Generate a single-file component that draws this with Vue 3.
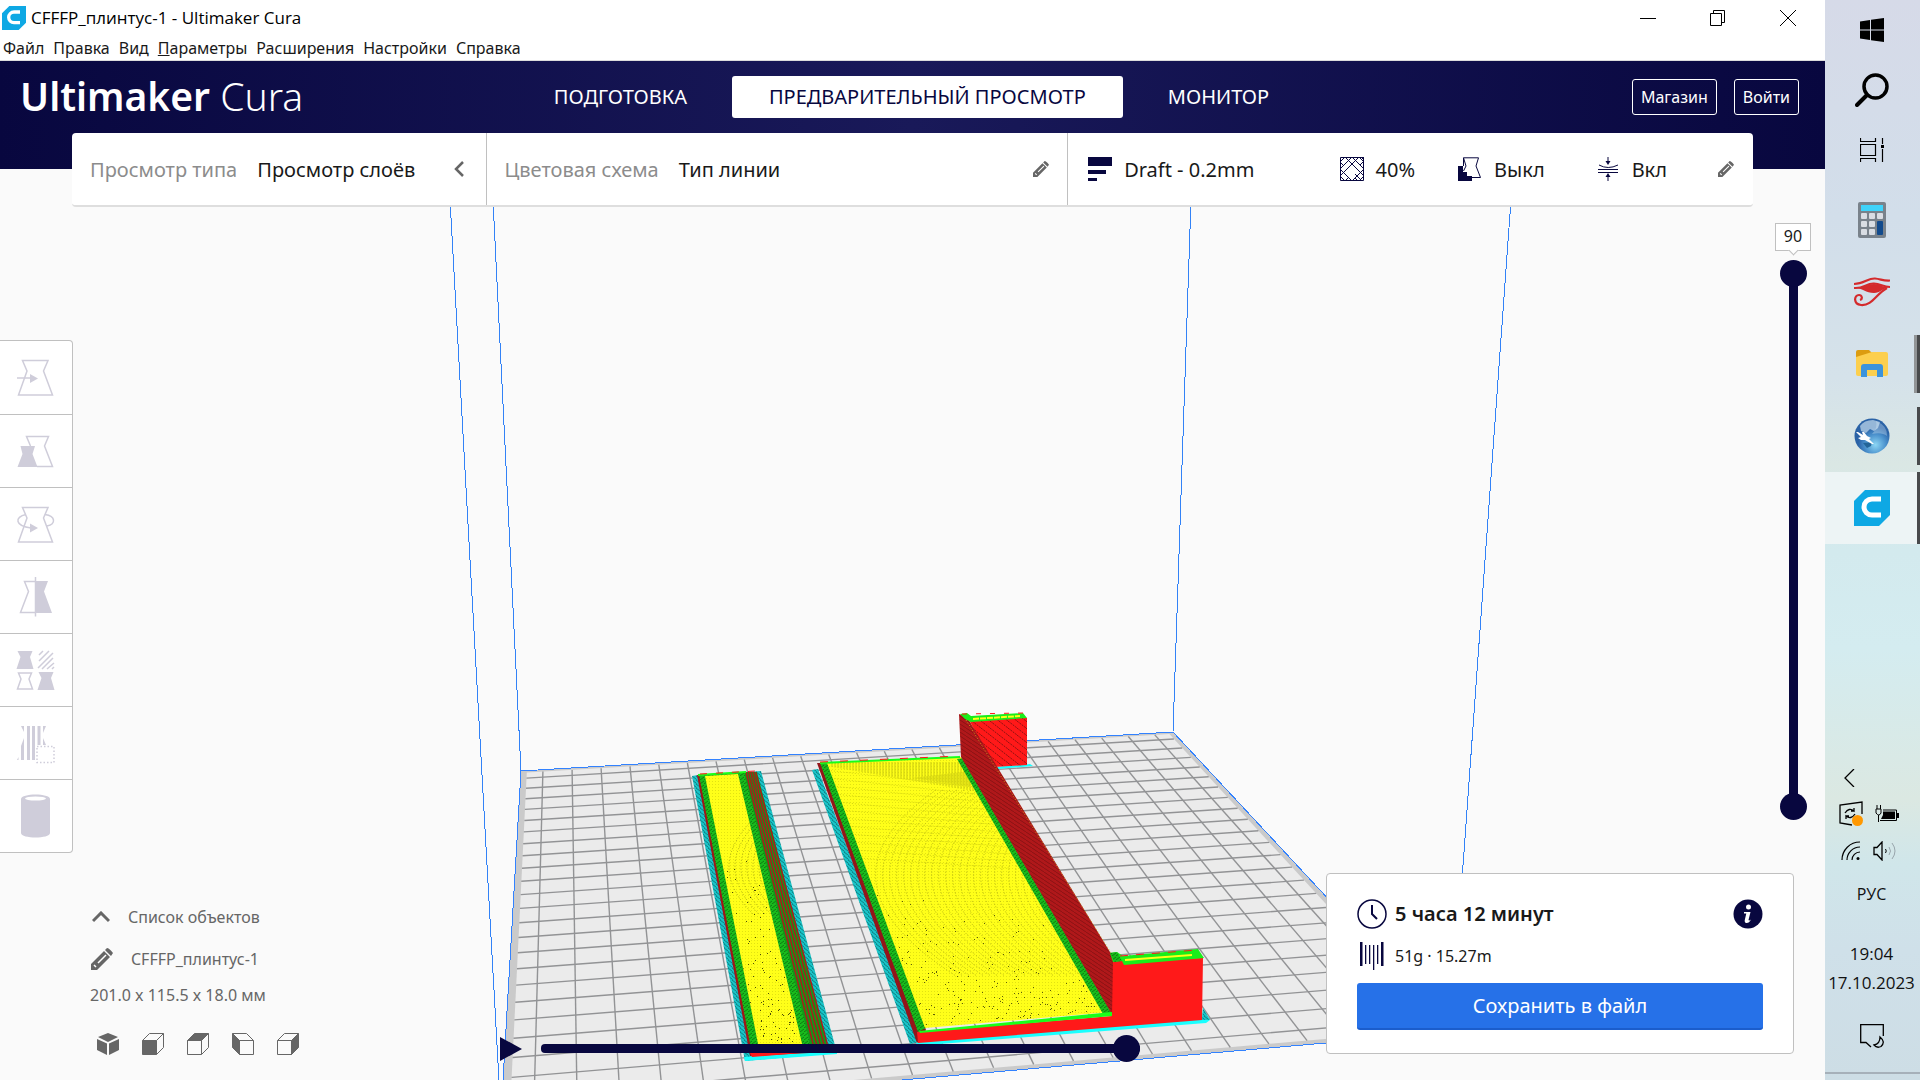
<script setup>
import { ref } from 'vue'

const menus = ['Файл', 'Правка', 'Вид', 'Параметры', 'Расширения', 'Настройки', 'Справка']
const stages = ['ПОДГОТОВКА', 'ПРЕДВАРИТЕЛЬНЫЙ ПРОСМОТР', 'МОНИТОР']
const activeStage = ref(1)
const topLayer = ref(90)
const bottomLayer = ref(0)
const pathStep = ref(100)

// Build plate, 235 x 235 mm, projected on the viewport
const plate = [[521, 771], [1173, 732], [1452, 1032], [501, 1115]]
const [[ax, ay], [bx, by], [cx, cy], [dx, dy]] = plate
const sx = ax - bx + cx - dx
const sy = ay - by + cy - dy
const det = (bx - cx) * (dy - cy) - (dx - cx) * (by - cy)
const g = (sx * (dy - cy) - (dx - cx) * sy) / det
const h = ((bx - cx) * sy - sx * (by - cy)) / det
function project(mx, my) {
  const u = mx / 235
  const v = my / 235
  const w = g * u + h * v + 1
  const x = ((bx - ax + g * bx) * u + (dx - ax + h * dx) * v + ax) / w
  const y = ((by - ay + g * by) * u + (dy - ay + h * dy) * v + ay) / w
  return [Math.round(x * 10) / 10, Math.round(y * 10) / 10]
}
const poly = (pts) => pts.map((p) => p.join(',')).join(' ')
const platePoints = poly(plate)
const innerPoints = poly([project(2, 2), project(233, 2), project(233, 233), project(2, 233)])
const gridLines = []
for (let i = 0; i < 23; i++) {
  const m = 7.5 + i * 10
  gridLines.push([...project(m, 2), ...project(m, 233)])
  gridLines.push([...project(2, m), ...project(233, m)])
}

// Red walls running along the narrow part
const ribs = [0, 1, 2, 3, 4].map((i) => [746 + i * 2.4, 772, 815 + i * 3.6, 1052])

// Toolpath rings on the top skin
const rings = []
for (let k = 0; k < 30; k++) {
  const x = 846 + k * 7
  rings.push(`M${x + 90},790 Q${x - 40},880 ${x + 110},976`)
}
const smallRings = []
for (let k = 0; k < 9; k++) {
  const x = 718 + k * 6
  smallRings.push(`M${x + 40},815 Q${x - 16},865 ${x + 36},915`)
}
const fan = []
for (let x = 832; x < 975; x += 3) fan.push([x, 762, x, 766 + (x - 826) * 0.17])
for (let x = 912; x < 970; x += 3) fan.push([x, 778 - (x - 912) * 0.12, x, 778 + (x - 912) * 0.14])

// Gaps between lines, denser towards the viewer
let seed = 7
const rnd = () => (seed = (seed * 16807) % 2147483647) / 2147483647
const specks = []
for (let i = 0; i < 420; i++) {
  const t = Math.sqrt(rnd())
  specks.push([Math.round(840 + rnd() * 280), Math.round(890 + t * 136)])
}
for (let i = 0; i < 240; i++) {
  const t = Math.sqrt(rnd())
  specks.push([Math.round(715 + rnd() * 90), Math.round(850 + t * 200)])
}

const keys = [0, 1, 2].flatMap((r) => [0, 1, 2].map((c) => [3 + c * 8, 11 + r * 8])).filter((k) => !(k[0] === 19 && k[1] > 12))
</script>

<template>
  <div class="desktop">
    <div class="window">
      <svg class="scene" viewBox="0 0 1825 1080" preserveAspectRatio="xMidYMin slice" aria-hidden="true">
        <defs>
          <pattern id="cyanTex" width="4" height="4" patternUnits="userSpaceOnUse">
            <rect width="4" height="4" fill="#19c4c8" /><path d="M0 0L4 3M-2 2L2 5" stroke="#0c7f82" />
          </pattern>
          <pattern id="greenTex" width="4" height="4" patternUnits="userSpaceOnUse">
            <rect width="4" height="4" fill="#18bb1c" /><path d="M0 4L4 1" stroke="#0c7a10" />
          </pattern>
          <pattern id="redTex" width="6" height="4" patternUnits="userSpaceOnUse">
            <rect width="6" height="4" fill="#b0181a" /><path d="M0 0L6 4" stroke="#8a1114" />
          </pattern>
          <pattern id="blockTex" width="9" height="7" patternUnits="userSpaceOnUse">
            <rect width="9" height="7" fill="#ff1919" /><path d="M0 0L9 7" stroke="#8c1010" stroke-dasharray="2 1" />
          </pattern>
          <pattern id="yellowTex" width="3" height="3" patternUnits="userSpaceOnUse">
            <rect width="3" height="3" fill="#ffff19" /><rect x="1" y="1" width="1" height="1" fill="#e2e212" />
          </pattern>
          <clipPath id="bigSkin"><polygon points="827,763 959,757 1108,1012 925,1028" /></clipPath>
          <clipPath id="slimSkin"><polygon points="706,776 738,774 804,1052 760,1054" /></clipPath>
        </defs>

        <rect width="1825" height="1080" fill="#fafafa" />
        <polygon :points="platePoints" fill="#cacaca" />
        <polygon :points="innerPoints" fill="#ebebeb" />
        <line v-for="(l, i) in gridLines" :key="'g' + i" :x1="l[0]" :y1="l[1]" :x2="l[2]" :y2="l[3]" stroke="#929395" stroke-width="1.4" />
        <polygon :points="platePoints" fill="none" stroke="#3282ff" shape-rendering="crispEdges" />
        <path d="M450 200L499 1080M493 200L521 771M1191 200L1173 732M1511 200L1451 1032" fill="none" stroke="#3282f6" shape-rendering="crispEdges" />

        <!-- narrow part -->
        <polygon points="692,776 698,775 761,771 837,1053 745,1061" fill="url(#cyanTex)" />
        <polygon points="745,1061 744,1057 837,1049 837,1054" fill="#19ffff" />
        <polygon points="697,775 756,772 829,1052 750,1056" fill="#a01518" />
        <polygon points="699,775 746,772 815,1052 752,1054" fill="url(#greenTex)" />
        <polygon points="705,776 738,774 804,1052 760,1054" fill="url(#yellowTex)" />
        <polygon points="744,772 757,772 829,1052 812,1052" fill="#14961a" />
        <line v-for="(l, i) in ribs" :key="'r' + i" :x1="l[0]" :y1="l[1]" :x2="l[2]" :y2="l[3]" stroke="#b0181a" stroke-width="1.4" />
        <path d="M698 775L746 772" stroke="#19ff19" stroke-width="2" /><path d="M700 774L756 771" stroke="#ff1919" stroke-dasharray="7 9" />
        <polygon points="750,1053 800,1051 800,1053 752,1057" fill="#ff1919" />
        <g clip-path="url(#slimSkin)" fill="none" stroke="#a6a614" stroke-dasharray="1 2">
          <path v-for="(p, i) in smallRings" :key="i" :d="p" />
        </g>

        <!-- wide part -->
        <polygon points="812,770 818,769 920,1042 910,1044" fill="url(#cyanTex)" />
        <polygon points="917,1042 1202,1018 1203,1008 1210,1020 1206,1023 915,1046" fill="#19ffff" />
        <polygon points="1202,1020 1203,1008 1210,1020" fill="url(#cyanTex)" />
        <polygon points="817,763 822,763 926,1030 917,1043" fill="#94151a" />
        <polygon points="820,763 828,762 926,1028 918,1032" fill="url(#greenTex)" />
        <polygon points="827,763 961,757 1110,1012 925,1028" fill="url(#yellowTex)" />
        <g clip-path="url(#bigSkin)" fill="none">
          <line v-for="(l, i) in fan" :key="i" :x1="l[0]" :y1="l[1]" :x2="l[2]" :y2="l[3]" stroke="#c9c910" />
          <path v-for="(p, i) in rings" :key="'c' + i" :d="p" stroke="#b0b014" stroke-dasharray="1 2" />
          <path v-for="k in 12" :key="'t' + k" :d="`M${822 + k * 3},${762 + k * 8} L1010,${784 + k * 7}`" stroke="#d2d212" stroke-dasharray="1 2" />
        </g>
        <g clip-path="url(#bigSkin)"><rect v-for="(s, i) in specks.slice(0, 420)" :key="i" :x="s[0]" :y="s[1]" width="1" height="1" fill="#5e5e08" /></g>
        <g clip-path="url(#slimSkin)"><rect v-for="(s, i) in specks.slice(420)" :key="i" :x="s[0]" :y="s[1]" width="1" height="1" fill="#4c4c06" /></g>
        <path d="M820 763L960 757" stroke="#19ff19" stroke-width="2" /><path d="M820 762L960 756" stroke="#ff1919" stroke-dasharray="8 12" />
        <polygon points="957,759 964,758 1112,1013 1103,1014" fill="url(#greenTex)" />
        <polygon points="995,767 1030,764 1033,766 997,769" fill="#19ffff" />
        <polygon points="967,716 1027,718 1027,765 994,767" fill="url(#blockTex)" />
        <polygon points="959,714 967,717 973,727 1113,957 1113,1016 961,757" fill="url(#redTex)" />
        <path d="M966 720L1111 953" stroke="#c8961e" stroke-dasharray="1 2" />
        <polygon points="960,714 967,713 971,716 1023,713 1027,718 971,722 965,719" fill="#19ee19" />
        <path d="M973 719L1020 716" stroke="#ffff19" stroke-width="2" stroke-dasharray="6 1" />
        <path d="M962 714L1024 713" stroke="#ff1919" stroke-dasharray="5 9" />
        <polygon points="917,1032 1112,1016 1113,960 1203,958 1202,1020 918,1043" fill="#ff1919" />
        <polygon points="919,1031 1112,1012 1112,1016 920,1033" fill="#19ff19" />
        <polygon points="1110,953 1117,952 1123,956 1198,949 1204,958 1124,965 1122,961 1113,962" fill="#19ee19" />
        <polygon points="1110,953 1117,952 1122,961 1114,962" fill="url(#greenTex)" />
        <path d="M1125 960L1192 955" stroke="#ffff19" stroke-width="2" /><path d="M1120 956L1197 950" stroke="#ff1919" stroke-dasharray="8 8" />
      </svg>

      <header class="titlebar">
        <svg class="app-icon" viewBox="0 0 36 36"><path d="M11 0H36V25L25 36H0V11Z" fill="#0ea8e4" /><path d="M27 9H18a8 8 0 0 0 0 16H27" fill="none" stroke="#fff" stroke-width="5" /></svg>
        <span class="title">CFFFP_плинтус-1 - Ultimaker Cura</span>
        <div class="controls">
          <button aria-label="Свернуть"><svg viewBox="0 0 16 16"><path d="M0 8.5H16" stroke="#000" /></svg></button>
          <button aria-label="Восстановить"><svg viewBox="0 0 16 16" fill="none" stroke="#000"><path d="M.5 3.5H11.5V15.5H.5ZM3.5 3.5V.5H14.5V12.5H11.5" /></svg></button>
          <button aria-label="Закрыть"><svg viewBox="0 0 16 16"><path d="M0 0L16 16M16 0L0 16" stroke="#000" /></svg></button>
        </div>
      </header>
      <nav class="menubar">
        <button v-for="m in menus" :key="m"><template v-if="m === 'Параметры'"><u>П</u>араметры</template><template v-else>{{ m }}</template></button>
      </nav>

      <div class="banner">
        <div class="logo"><b>Ultimaker</b> <span>Cura</span></div>
        <nav class="stages">
          <button v-for="(s, i) in stages" :key="s" :class="{ active: i === activeStage }" @click="activeStage = i">{{ s }}</button>
        </nav>
        <div class="account"><button>Магазин</button><button>Войти</button></div>
      </div>

      <div class="toolbar">
        <button class="panel view-type">
          <span class="muted">Просмотр типа</span><span>Просмотр слоёв</span>
          <svg class="end" width="12" height="16" viewBox="0 0 12 16"><path d="M10 1L3 8L10 15" fill="none" stroke="#666" stroke-width="2.5" /></svg>
        </button>
        <button class="panel scheme">
          <span class="muted">Цветовая схема</span><span>Тип линии</span>
          <svg class="end" width="16" height="16" viewBox="0 0 22 22"><path d="M0 22V16L13 3L19 9L6 22ZM14 2L16 0Q18 0 22 5L20 8Z" fill="#666" /><path d="M3 17L5 19M7 15L15 7" stroke="#fff" stroke-width="1.5" /></svg>
        </button>
        <button class="panel profile">
          <span class="setting grow">
            <svg width="24" height="24" viewBox="0 0 24 24" fill="#08073f"><path d="M0 0H24V9H0ZM0 13H18V17H0ZM0 21H9V24H0Z" /></svg>Draft - 0.2mm
          </span>
          <span class="setting infill">
            <svg width="24" height="24" viewBox="0 0 24 24" fill="none" stroke="#08073f"><path d="M.5 .5H23.5V23.5H.5ZM0 5L5 0M0 12L12 0M3 16L19 0M12 24L24 12M0 19L4 15M5 24L9 20M19 24L24 19M21 3L24 0M0 12L12 24M0 19L5 24M5 0L24 19M12 0L24 12M19 0L24 5M0 5L4 9M15 17L22 24M15 21L18 24M20 8L24 4" /></svg>40%
          </span>
          <span class="setting">
            <svg width="24" height="24" viewBox="0 0 24 24"><path d="M0 9H5V15H9V19H14V24H0Z" fill="#08073f" /><path d="M5.5 9V.8H20.5L18 9L22.5 20.5H14M5.5 .8L8 9L5.5 14" fill="none" stroke="#08073f" /></svg>Выкл
          </span>
          <span class="setting">
            <svg width="24" height="24" viewBox="0 0 24 24" fill="none" stroke="#08073f"><path d="M3 8Q12 13 22 8M2 12.5H22M2 15.5H22M12 0V6M12 18V24" /><path d="M9.500 4H14.500L12 8ZM9.500 20H14.500L12 16Z" fill="#08073f" stroke="none" /></svg>Вкл
          </span>
          <svg width="16" height="16" viewBox="0 0 22 22"><path d="M0 22V16L13 3L19 9L6 22ZM14 2L16 0Q18 0 22 5L20 8Z" fill="#666" /><path d="M3 17L5 19M7 15L15 7" stroke="#fff" stroke-width="1.5" /></svg>
        </button>
      </div>

      <main class="stage">
        <div class="left">
          <div class="tools">
            <button aria-label="Перемещение"><svg viewBox="0 0 38 38"><path class="o" d="M5.500 1.500H31L26.500 12L35.500 36H1.500L10 12Z" /><path class="o" d="M0 19H14" /><path class="f" d="M13 15L21 19.500L13 24Z" /></svg></button>
            <button aria-label="Масштаб"><svg viewBox="0 0 38 38"><path class="o" d="M13.500 14L9.500 4.500H31.500L27.500 14L35.500 34.500H20" /><path class="f" d="M3.500 14H18L15.500 22L20.500 35H.5L5.500 22Z" /></svg></button>
            <button aria-label="Поворот"><svg viewBox="0 0 38 38"><path class="o" d="M5.500 2.500H31L26.500 13L35.500 37H1.500L10 13Z" /><path class="o" d="M9 9.500C-3 12-2 21 14 23M28 9.500C39 11 39 19 30 21" /><path class="f" d="M13 18.500L21 23L13 27.500Z" /></svg></button>
            <button aria-label="Зеркало"><svg viewBox="0 0 38 38"><path class="o" d="M18.500 3.500H7.500L11.500 13.500L3.500 34.500H18.500M18.500-1V38.500" /><path class="f" d="M18.500 3H31L27 13.500L35 35H18.500Z" /></svg></button>
            <button aria-label="Параметры модели"><svg viewBox="0 0 38 38"><path class="f" d="M.5 0H15.500L13 6L16.500 18H-.5L3.500 6ZM21.500 21H36.500L34 27L37.500 39H20.500L24.500 27Z" /><path class="o" d="M1.500 22H14.500L12 28L15.500 38H.5L4 28Z" /><path class="o" d="M22 4L26 0M22 10L32 0M21 17L36 2M25 18L36 7M30 18L37 12M35 18L37 16" /></svg></button>
            <button aria-label="Блокировка поддержек"><svg viewBox="0 0 38 38"><path class="f" d="M4 2H7V8ZM4 36V22L7 14V36ZM0 36L1.500 33V36ZM10 2H13V36H10ZM15 2H18V36H15ZM20.500 2H23.500V21H20.500ZM26 2H29L26 9ZM26 14L29 21H26Z" /><rect class="o" x="20" y="22.500" width="17" height="16" stroke-dasharray="1.5 2" /></svg></button>
            <button aria-label="Опора"><svg viewBox="0 0 38 38"><path class="f" d="M4 2C4-4 33-4 33 2V36C33 42 4 42 4 36Z" /><ellipse cx="18.500" cy="1.500" rx="10.500" ry="2" fill="#fff" /></svg></button>
          </div>
          <div class="objects">
            <button class="list-toggle"><svg width="18" height="12" viewBox="0 0 18 12"><path d="M1 10L9 2L17 10" fill="none" stroke="#666" stroke-width="3" /></svg>Список объектов</button>
            <button class="rename"><svg width="22" height="22" viewBox="0 0 22 22"><path d="M0 22V16L13 3L19 9L6 22ZM14 2L16 0Q18 0 22 5L20 8Z" fill="#666" /><path d="M3 17L5 19M7 15L15 7" stroke="#fff" stroke-width="1.5" /></svg>CFFFP_плинтус-1</button>
            <div class="dims">201.0 x 115.5 x 18.0 мм</div>
            <div class="views">
              <button aria-label="3D вид"><svg viewBox="0 0 22 22" fill="#666"><path d="M11 0L21 4L11 9L1 4ZM0 6L10 10.500V22L0 17ZM22 6L12 10.500V22L22 17Z" /></svg></button>
              <button aria-label="Вид спереди"><svg viewBox="0 0 22 22" fill="none" stroke="#666"><path d="M.5 7.500L7.500 .5H21.500V14.500L14.500 21.500M14.500 7.500L21.500 .5" /><path d="M.5 7.500H14.500V21.500H.5Z" fill="#666" /></svg></button>
              <button aria-label="Вид сверху"><svg viewBox="0 0 22 22" fill="none" stroke="#666"><path d="M.5 7.500H14.500V21.500H.5ZM14.500 21.500L21.500 14.500V.5" /><path d="M.5 7.500L7.500 .5H21.500L14.500 7.500Z" fill="#666" /></svg></button>
              <button aria-label="Вид слева"><svg viewBox="0 0 22 22" fill="none" stroke="#666"><path d="M7.500 7.500H21.500V21.500H7.500ZM.5 .5H14.500L21.500 7.500" /><path d="M.5 .5L7.500 7.500V21.500L.5 14.500Z" fill="#666" /></svg></button>
              <button aria-label="Вид справа"><svg viewBox="0 0 22 22" fill="none" stroke="#666"><path d="M.5 7.500H14.500V21.500H.5ZM.5 7.500L7.500 .5H21.500" /><path d="M14.500 7.500L21.500 .5V14.500L14.500 21.500Z" fill="#666" /></svg></button>
            </div>
          </div>
        </div>

        <div class="playback">
          <button aria-label="Воспроизвести"><svg width="22" height="24" viewBox="0 0 22 24"><path d="M0 0L22 12L0 24Z" fill="#08073f" /></svg></button>
          <input v-model="pathStep" type="range" min="0" max="100" aria-label="Ход линии">
        </div>

        <div class="right">
          <div class="layers">
            <output class="layer-label">{{ topLayer }}</output>
            <div class="layer-track">
              <input v-model="topLayer" type="range" min="0" max="90" aria-label="Верхний слой">
              <input v-model="bottomLayer" type="range" min="0" max="90" aria-label="Нижний слой">
            </div>
          </div>
          <section class="job">
            <div class="job-row">
              <svg width="30" height="30" viewBox="0 0 30 30" fill="none" stroke="#08073f"><circle cx="15" cy="15" r="14" stroke-width="1.5" /><path d="M15 6V15L20 20" stroke-width="2" /></svg>
              <strong>5 часа 12 минут</strong>
              <button class="info" aria-label="Сведения"><svg width="30" height="30" viewBox="0 0 30 30"><circle cx="15" cy="15" r="14.500" fill="#08073f" /><circle cx="15.500" cy="8" r="2.500" fill="#fff" /><path d="M11 13H17.500L15.500 21Q16 22 18 20.500Q16 24.500 13 24Q11 23 12 20L13.300 14.500H11Z" fill="#fff" /></svg></button>
            </div>
            <div class="job-row material">
              <svg width="30" height="28" viewBox="0 0 30 28" fill="#08073f"><path d="M3 0H5.500V24H3ZM24 0H26.500V24H24ZM8 3H9.300V22H8ZM12 3H13.300V22H12ZM16 3H17.300V28H16ZM20 3H21.300V22H20Z" /></svg>
              <span>51g · 15.27m</span>
            </div>
            <button class="save">Сохранить в файл</button>
          </section>
        </div>
      </main>
    </div>

    <aside class="taskbar">
      <button class="sys" aria-label="Пуск"><svg width="24" height="24" viewBox="0 0 24 24"><path d="M0 3.500L10 2V11.500H0ZM11 1.800L24 0V11.500H11ZM0 12.500H10V22L0 20.500ZM11 12.500H24V24L11 22.200Z" /></svg></button>
      <button class="sys" aria-label="Поиск"><svg width="34" height="34" viewBox="0 0 34 34" fill="none" stroke="#000"><circle cx="20.500" cy="13.500" r="11.500" stroke-width="3.500" /><path d="M12 22L2 32" stroke-width="4" stroke-linecap="round" /></svg></button>
      <button class="sys" aria-label="Представление задач"><svg width="24" height="24" viewBox="0 0 24 24" fill="none" stroke="#000" stroke-width="1.2"><path d="M.5 0V3.500H15.500V0M.5 6.500H15.500V17.500H.5ZM.5 24V20.500H15.500V24M22.500 0V6M22.500 11V24" /><path d="M21 7H24V10H21Z" fill="#000" stroke="none" /></svg></button>
      <div class="apps">
        <button aria-label="Калькулятор"><svg width="28" height="36" viewBox="0 0 28 36"><rect width="28" height="36" rx="2" fill="#79828b" /><rect x="3" y="3" width="22" height="6" fill="#3fd3fa" /><rect v-for="(k, i) in keys" :key="i" :x="k[0]" :y="k[1]" width="6" height="6" rx="1" fill="#d9dde3" /><rect x="19" y="19" width="6" height="14" rx="1" fill="#124a8c" /></svg></button>
        <button aria-label="Просмотр"><svg width="36" height="30" viewBox="0 0 36 30" fill="none" stroke="#d42a2c"><path d="M0 7C10 7 14 1 21 1.500C27 2 29 4 36 3.500" stroke-width="2.2" /><path d="M0 11C10 12 12 6 20 6.500C27 7 29 10 36 10" stroke-width="2" /><path d="M1 11C11 11 12 7 20 7C26 7 28 10 35 10.500C29 11 26 16 20 16C12 16 8 11 1 11Z" fill="#d42a2c" stroke="none" /><path d="M33 11C22 17 18 29 7 28C-1 27 0 18 5 18C8 18 9 22 6 23" stroke-width="2.2" /></svg></button>
        <button class="open double" aria-label="Проводник"><svg width="32" height="28" viewBox="0 0 32 28"><path d="M0 2Q0 0 2 0H13L16 3V8H0Z" fill="#dc9c10" /><path d="M0 7L16 2H30Q32 2 32 4V24Q32 26 30 26H2Q0 26 0 24Z" fill="#fccf4e" /><path d="M5 27V17Q5 14 8 14H24Q27 14 27 17V27H21V20H11V27Z" fill="#3c93dc" /></svg></button>
        <button class="open" aria-label="Браузер"><svg width="36" height="36" viewBox="0 0 36 36"><defs><radialGradient id="globe" cx=".6" cy=".75"><stop offset="0" stop-color="#8cd6f4" /><stop offset=".6" stop-color="#4a90cc" /><stop offset="1" stop-color="#2a62a6" /></radialGradient></defs><circle cx="18" cy="18" r="17.500" fill="url(#globe)" /><path d="M6 8Q10 2 19 2L26 4L24 10L20 13L16 11L12 15L7 13Z" fill="#c5dcee" opacity=".7" /><path d="M22 3Q34 8 33 18Q28 14 18 16Q24 10 22 3Z" fill="#d8ecfa" opacity=".35" /><path d="M9 25L18 24L17 28L13 30Z" fill="#246598" /><path d="M2 14L4 14L9 17L8 14L10 14L13 18L17 20L15 21L20 26L18 26L11 22L7 22L4 20L7 19Z" fill="#fff" /></svg></button>
        <button class="open current" aria-label="Cura"><svg width="36" height="36" viewBox="0 0 36 36"><path d="M11 0H36V25L25 36H0V11Z" fill="#0ea8e4" /><path d="M27 9H18a8 8 0 0 0 0 16H27" fill="none" stroke="#fff" stroke-width="5" /></svg></button>
      </div>
      <div class="tray">
        <button class="expand" aria-label="Скрытые значки"><svg width="11" height="18" viewBox="0 0 11 18"><path d="M10 0L1 9L10 18" fill="none" stroke="#000" stroke-width="1.3" /></svg></button>
        <div class="tray-row">
          <svg width="24" height="26" viewBox="0 0 24 26" fill="none" stroke="#000" stroke-width="1.3"><path d="M13 24L1 22V4L23 1V13" /><path d="M6 12Q10 6 15 10V7M15 10H12M16 13Q12 19 7 15V18M7 15H10" /><circle cx="18.500" cy="19.500" r="5.500" fill="#ff9800" stroke="none" /></svg>
          <svg width="24" height="18" viewBox="0 0 24 18"><path d="M8 5H21.500V15.500H5" fill="none" stroke="#000" /><path d="M8 6.500H20V14H6L8 10ZM22 8H24V13H22Z" /><path d="M1 4V8Q4 12 6 8V4ZM2 4V0M5.500 4V0M3.500 10V17" fill="none" stroke="#000" /></svg>
        </div>
        <div class="tray-row">
          <svg width="20" height="20" viewBox="0 0 20 20" fill="none" stroke="#000" stroke-width="1.2"><path d="M1 19A18 18 0 0 1 19 1M6 19A13 13 0 0 1 19 6M11 19A8 8 0 0 1 19 11" /><circle cx="17" cy="17.500" r="1.500" fill="#000" stroke="none" /></svg>
          <svg width="24" height="20" viewBox="0 0 24 20" fill="none" stroke="#000"><path d="M1 6.500H4L9 1V19L4 13.500H1Z" stroke-width="1.3" /><path d="M12.500 8Q14 10 12.500 12" /><path d="M16 6Q19 10 16 14M19 2Q25 10 19 18" stroke="#99a5ac" /></svg>
        </div>
        <button class="lang">РУС</button>
        <button class="clock"><span>19:04</span><span>17.10.2023</span></button>
        <button class="notify" aria-label="Уведомления"><svg width="24" height="24" viewBox="0 0 24 24" fill="none" stroke="#000" stroke-width="1.3"><path d="M11 23L6 18.500H.7V.7H23.300V12" /><path d="M20 13Q20 20 14 21Q17 24.500 21 22.500Q26 18 20 13Z" /></svg></button>
      </div>
    </aside>
  </div>
</template>

<style>
body { margin: 0; }
</style>

<style scoped>
.desktop { display: flex; min-height: 100vh; font-family: "Noto Sans", "Open Sans", sans-serif; color: #191919; }
button { margin: 0; padding: 0; border: 0; background: none; font: inherit; color: inherit; cursor: pointer; }
svg { display: block; flex: none; }
.window { position: relative; flex: 1; min-width: 0; display: flex; flex-direction: column; background: #fafafa; overflow: hidden; }
.scene { position: absolute; inset: 0; width: 100%; height: 100%; }
.titlebar, .menubar, .banner, .toolbar, .stage { position: relative; }

.titlebar { display: flex; align-items: center; height: 35px; padding: 0 2px; background: #fff; color: #000; }
.app-icon { width: 24px; height: 24px; margin-right: 5px; }
.title { flex: 1; font: 17px/24px "Open Sans", sans-serif; }
.controls { display: flex; }
.controls button { width: 70px; height: 32px; display: grid; place-items: center; }
.controls svg { width: 16px; height: 16px; overflow: visible; }
.menubar { display: flex; gap: 9px; height: 25px; padding-left: 3px; background: #fff; border-bottom: 1px solid #dcdcdc; font-size: 16px; line-height: 24px; }

.banner { display: flex; justify-content: space-between; height: 108px; box-sizing: border-box; padding: 15px 26px 0 20px; background: linear-gradient(90deg, #08073f, #191959 50%, #08073f); color: #fff; }
.logo { flex: 1; font-size: 39px; line-height: 40px; font-weight: 300; white-space: nowrap; }
.logo b { font-weight: 600; }
.stages { display: flex; gap: 8px; height: 42px; padding-left: 4px; font-size: 20px; }
.stages button { padding: 0 37px 2px; border-radius: 3px; white-space: nowrap; }
.stages .active { background: #fff; color: #08073f; }
.account { flex: 1; display: flex; justify-content: flex-end; gap: 17px; padding-top: 3px; }
.account button { height: 36px; padding: 0 8px; border: 1px solid #fff; border-radius: 3px; font-size: 16px; }

.toolbar { display: flex; height: 72px; margin: -36px 72px 0; background: #fff; border-bottom: 2px solid #dedede; border-radius: 4px; font-size: 20px; }
.panel { display: flex; align-items: center; gap: 20px; padding: 0 18px; box-sizing: border-box; white-space: nowrap; text-align: left; }
.panel + .panel { border-left: 1px solid #c0c0c0; }
.muted { color: #8c8c8c; }
.end { margin-left: auto; }
.view-type { width: 24.6%; padding-right: 21px; }
.scheme { width: 34.6%; }
.profile { flex: 1; gap: 51px; padding: 0 19px 0 20px; }
.setting { display: flex; align-items: center; gap: 12px; }
.infill { margin-right: -8px; }
.grow { flex: 1; }

.stage { flex: 1; display: grid; grid-template-columns: 500px 1fr auto; }
.left { display: flex; flex-direction: column; align-items: flex-start; padding: 133px 0 25px; }
.tools { display: flex; flex-direction: column; width: 73px; box-sizing: border-box; border: 1px solid #c0c0c0; border-left: 0; border-radius: 0 4px 4px 0; background: #fff; }
.tools button { height: 73px; box-sizing: border-box; padding-left: 17px; }
.tools button + button { border-top: 1px solid #c0c0c0; }
.tools svg { width: 38px; height: 38px; overflow: visible; }
.o { fill: none; stroke: #cfcdda; stroke-width: 1.5; }
.f { fill: #cfcdda; }
.objects { margin-top: auto; padding-left: 90px; font-size: 16px; line-height: 24px; color: #666; }
.list-toggle, .rename { display: flex; align-items: center; gap: 18px; }
.list-toggle { padding-left: 2px; margin-bottom: 18px; }
.rename { padding-left: 1px; margin-bottom: 12px; }
.views { display: flex; gap: 23px; margin: 26px 0 0 7px; }
.views svg { width: 22px; height: 22px; }

.playback { display: flex; align-items: center; align-self: end; gap: 19px; width: 640px; height: 27px; margin-bottom: 18px; }
.playback input { flex: 1; }
input[type="range"] { appearance: none; margin: 0; background: none; }
.playback input { height: 27px; }
.playback input::-webkit-slider-runnable-track { height: 9px; border-radius: 4px; background: #08073f; }
input::-webkit-slider-thumb { appearance: none; width: 27px; height: 27px; border-radius: 50%; background: #08073f; }
.playback input::-webkit-slider-thumb { margin-top: -9px; }

.right { display: flex; flex-direction: column; justify-content: space-between; align-items: flex-end; padding: 16px 31px 26px 0; }
.layers { display: flex; flex-direction: column; align-items: center; gap: 9px; width: 36px; margin-right: -17px; }
.layer-label { position: relative; width: 34px; height: 26px; border: 1px solid #c0c0c0; background: #fff; font-size: 16px; line-height: 24px; text-align: center; }
.layer-label::after { content: ""; position: absolute; left: 14px; bottom: -4px; width: 6px; height: 6px; background: #fff; border: solid #c0c0c0; border-width: 0 1px 1px 0; transform: rotate(45deg); }
.layer-track { position: relative; width: 27px; height: 560px; }
.layer-track::before { content: ""; position: absolute; inset: 10px 9px; background: #08073f; }
.layer-track input { position: absolute; inset: 0; width: 27px; height: 100%; writing-mode: vertical-lr; direction: rtl; pointer-events: none; }
.layer-track input::-webkit-slider-thumb { pointer-events: auto; }

.job { width: 468px; box-sizing: border-box; padding: 25px 30px 23px; border: 1px solid #c0c0c0; border-radius: 4px; background: #fff; }
.job-row { display: flex; align-items: center; gap: 8px; font-size: 16px; }
.job-row strong { font-size: 20px; font-weight: 600; line-height: 30px; }
.info { margin-left: auto; }
.material { margin: 13px 0 13px; height: 28px; }
.save { width: 100%; height: 47px; border-radius: 3px; background: #2671e8; border-bottom: 2px solid #1b5dcc; color: #fff; font-size: 20px; }

.taskbar { display: flex; flex-direction: column; width: 95px; flex: none; box-sizing: border-box; background: linear-gradient(#d6dae8, #d2deea 20%, #d5e2ea 35%, #dae7e4 43%, #d3eaee 51%, #d4ecf0 60%, #dbe8e2 74%, #d0e6ea 80%, #cfe0e9 88%, #cddde5); font-family: "Open Sans", sans-serif; color: #111; }
.taskbar button { display: grid; place-items: center; width: 100%; box-sizing: border-box; padding-right: 2px; }
.sys { height: 60px; }
.apps { margin-top: 4px; }
.apps button { height: 72px; position: relative; }
.open::after { content: ""; position: absolute; right: 0; top: 7px; bottom: 7px; width: 3px; background: #484a4c; }
.open.double::after { border-left: 3px solid #919496; }
.current { background: #edf4f5; }
.current::after { top: 0; bottom: 0; }
.tray { display: flex; flex-direction: column; align-items: center; margin-top: auto; padding-bottom: 6px; font-size: 17px; }
.taskbar .expand { height: 18px; margin: 0 0 13px -44px; }
.tray-row { display: flex; align-items: center; gap: 12px; height: 28px; margin-bottom: 9px; padding-right: 7px; }
.taskbar .lang { height: 24px; margin: 8px 0 33px; font-size: 16px; }
.clock span { line-height: 29px; }
.taskbar .notify { height: 24px; margin: 27px 0 24px; }
.tray::after { content: ""; width: 100%; height: 2px; background: #a6b0b9; }
</style>
